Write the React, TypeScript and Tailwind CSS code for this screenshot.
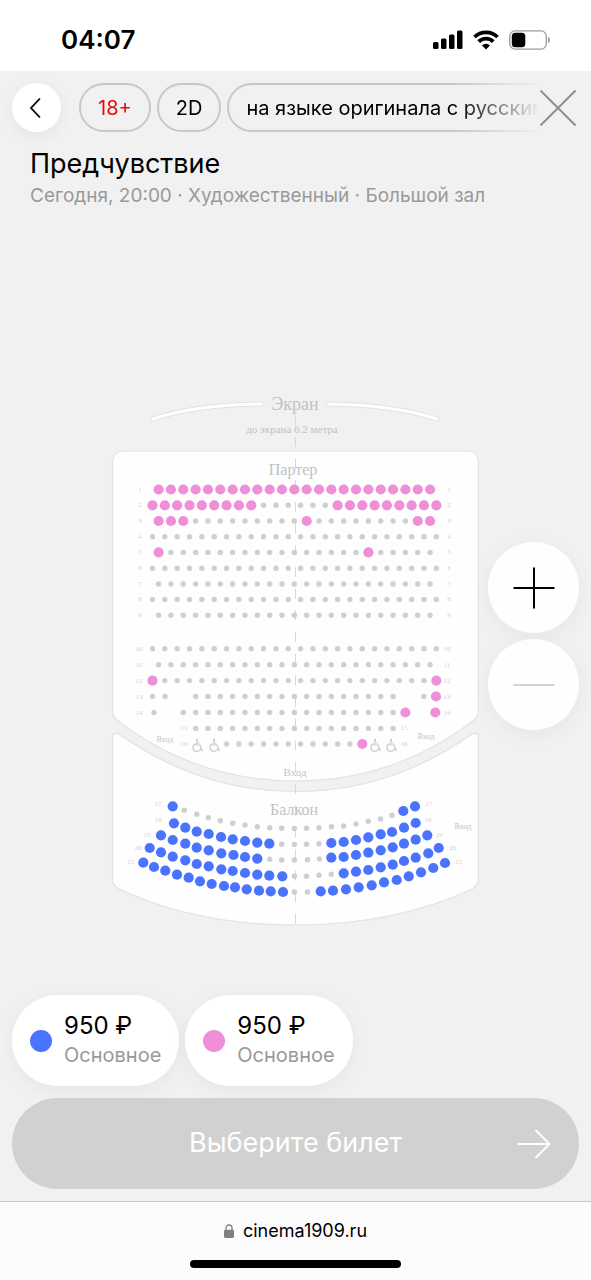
import { useState } from 'react';

type Zone = 'free' | 'pink' | 'blue';
type Point = [x: number, y: number];

interface ParterreRow {
  label: number;
  y: number;
  // odd rows start half a step further right than even ones
  start: number;
  from: number;
  to: number;
  available: number[];
  labelX: [number, number];
}

interface BalconyRow {
  label: number;
  labels: [Point, Point];
  seats: Point[];
  // number of seats on sale at the left and right ends of the row
  left: number;
  right: number;
}

const STEP = 12.34;
const WIDE = 152.5;
const NARROW = 158.6;

const range = (from: number, to: number) =>
  Array.from({ length: to - from + 1 }, (_, i) => from + i);

const parterre: ParterreRow[] = [
  { label: 1, y: 489.5, start: NARROW, from: 0, to: 22, available: range(0, 22), labelX: [140, 449] },
  { label: 2, y: 505.3, start: WIDE, from: 0, to: 23, available: [...range(0, 8), ...range(15, 23)], labelX: [140, 449] },
  { label: 3, y: 521, start: NARROW, from: 0, to: 22, available: [0, 1, 2, 12, 21, 22], labelX: [140, 449] },
  { label: 4, y: 536.8, start: WIDE, from: 0, to: 23, available: [], labelX: [140, 449] },
  { label: 5, y: 552.4, start: NARROW, from: 0, to: 22, available: [0, 17], labelX: [140, 449] },
  { label: 6, y: 568.2, start: WIDE, from: 0, to: 23, available: [], labelX: [140, 449] },
  { label: 7, y: 584, start: NARROW, from: 0, to: 22, available: [], labelX: [140, 449] },
  { label: 8, y: 599.4, start: WIDE, from: 0, to: 23, available: [], labelX: [140, 449] },
  { label: 9, y: 615.3, start: NARROW, from: 0, to: 22, available: [], labelX: [140, 449] },
  { label: 10, y: 648.8, start: WIDE, from: 0, to: 23, available: [], labelX: [139, 447] },
  { label: 11, y: 664.7, start: NARROW, from: 0, to: 22, available: [], labelX: [139, 447] },
  { label: 12, y: 680.6, start: WIDE, from: 0, to: 23, available: [0, 23], labelX: [139, 447] },
  { label: 13, y: 696.5, start: NARROW, from: 3, to: 19, available: [], labelX: [139, 447] },
  { label: 14, y: 712.5, start: NARROW, from: 2, to: 20, available: [20], labelX: [139, 447] },
  { label: 15, y: 728.4, start: NARROW, from: 3, to: 19, available: [], labelX: [184, 404] },
  { label: 16, y: 744, start: WIDE, from: 6, to: 17, available: [17], labelX: [184, 404] },
];

// seats that stand apart from their row
const sideSeats: { at: Point; zone: Zone }[] = [
  { at: [152.6, 696.5], zone: 'free' },
  { at: [165, 696.5], zone: 'free' },
  { at: [424, 696.5], zone: 'free' },
  { at: [436, 696.5], zone: 'pink' },
  { at: [154, 712.5], zone: 'free' },
  { at: [435.3, 712.5], zone: 'pink' },
];

const balcony: BalconyRow[] = [
  {
    label: 17,
    labels: [[158, 804], [429, 804]],
    left: 1,
    right: 2,
    seats: [
      [172.7, 806.3], [184.3, 810.3], [196.7, 814.3], [208.3, 817.7], [220.3, 820.7], [232.7, 823.3], [245, 825],
      [257.3, 826.7], [269.7, 827.7], [281.7, 828.3], [294.4, 828.5], [306.5, 828.3], [319, 827.7], [331.5, 826.7],
      [343.7, 826], [356, 824], [368.3, 821.3], [380.5, 819], [392, 815.3], [403.3, 811], [415, 806.3],
    ],
  },
  {
    label: 18,
    labels: [[158, 820], [428, 820]],
    left: 9,
    right: 8,
    seats: [
      [174, 823.3], [185.3, 827.7], [196.7, 831.7], [208.7, 834], [221, 837], [232.7, 839.3], [245, 841],
      [257.3, 842.7], [269.3, 843.7], [281.7, 844.3], [294.4, 844.5], [306.5, 844.3], [319, 843.7], [331.3, 843],
      [343.7, 842], [356, 840], [368.3, 837.3], [380.7, 834.3], [392, 832], [404, 827.7], [415.7, 823],
    ],
  },
  {
    label: 19,
    labels: [[147, 835], [439, 835]],
    left: 9,
    right: 9,
    seats: [
      [161, 835.3], [172.7, 840], [185.3, 843.7], [196.7, 847.7], [208.7, 850.3], [221.3, 853.3], [233.5, 855],
      [245, 857], [257.3, 858.7], [269.7, 859.3], [281.7, 860], [294.4, 860], [307.5, 859.7], [319.5, 859],
      [331.3, 857.7], [343.7, 857], [356, 855], [368.3, 852.7], [380.7, 850.3], [392.7, 847.3], [404, 843.7],
      [415.7, 839.7], [427.3, 835.3],
    ],
  },
  {
    label: 20,
    labels: [[138, 848], [453, 848]],
    left: 12,
    right: 9,
    seats: [
      [149.7, 848], [161, 852.3], [172.7, 856.7], [185.3, 860.3], [196.7, 864], [208.7, 866.3], [221.3, 869.3],
      [232.7, 871], [245, 873], [257.3, 874.7], [269.3, 875.7], [282.3, 876.3], [294.4, 876.3], [306.5, 876.3],
      [319, 875.3], [331.3, 874.3], [343.7, 873.3], [356, 871.7], [368.3, 870], [380.7, 867.3], [392.7, 864.7],
      [404, 861], [415.7, 857.7], [428.3, 853.3], [438.7, 848],
    ],
  },
  {
    label: 21,
    labels: [[131, 862], [459, 862]],
    left: 13,
    right: 11,
    seats: [
      [143.3, 862.7], [154, 867], [165.3, 870.7], [177, 874.7], [188.7, 877.7], [200, 881.3], [211.7, 884],
      [224, 886], [235, 887.3], [246.7, 889.3], [259, 890.7], [270.7, 891.3], [283, 892], [294.4, 892],
      [307.5, 892], [320.7, 891.3], [333, 890.7], [346, 889.3], [358.7, 887.3], [371.7, 885.3], [384, 882.3],
      [396.7, 880], [408.7, 876.3], [421, 872.3], [433.3, 868], [445, 863],
    ],
  },
];

const tariffs = [
  { id: 'balcony', price: '950 ₽', name: 'Основное', dot: 'bg-[#4a73ff]' },
  { id: 'parterre', price: '950 ₽', name: 'Основное', dot: 'bg-[#ee8fd8]' },
];

const zoneFill: Record<Zone, string> = {
  free: 'fill-[#cfcfcf]',
  pink: 'fill-[#ee8fd8]',
  blue: 'fill-[#4a73ff]',
};

function Seat({ at, zone }: { at: Point; zone: Zone }) {
  return <circle cx={at[0]} cy={at[1]} r={zone === 'free' ? 2.7 : 5.1} className={zoneFill[zone]} />;
}

function Wheelchair({ x, y }: { x: number; y: number }) {
  return (
    <g transform={`translate(${x} ${y})`} className="fill-none stroke-[#cccccc]" strokeWidth="1.2">
      <circle cx="0" cy="-5" r="1.2" className="fill-[#cccccc] stroke-none" />
      <path d="M0-4v4h3.2l1.6 5.4 1-.5M0-2h2.6" />
      <path d="M-1-1.200a3.800 3.800 0 1 0 4.600 4.200" />
    </g>
  );
}

function RowLabel({ x, y, children }: { x: number; y: number; children: number }) {
  return (
    <text x={x} y={y + 2} className="fill-[#d2d2d2] text-[7px]">
      {children}
    </text>
  );
}

function HallPlan({ zoomed }: { zoomed: boolean }) {
  return (
    <svg
      viewBox="0 380 591 560"
      role="img"
      aria-label="Схема зала"
      className={zoomed ? 'block w-full scale-150' : 'block w-full'}
    >
      <g strokeLinecap="round" className="fill-none">
        <path d="M153 419Q195 405 262 404M328 404Q395 405 437 419" className="stroke-[#e2e2e2]" strokeWidth="5" />
        <path d="M153 419Q195 405 262 404M328 404Q395 405 437 419" className="stroke-white" strokeWidth="3" />
      </g>

      <g className="fill-[#fefefe] stroke-[#e2e2e2]" strokeWidth="1.2">
        <path d="M124 451H467Q478.500 451 478.500 463V711Q478.500 716 474 720Q395 781 295.500 781Q196 781 117 720Q112.500 716 112.500 711V463Q112.500 451 124 451Z" />
        <path d="M112.500 738Q112.500 731 119 734Q200 791.500 295.500 791.500Q391 791.500 472 734Q478.500 731 478.500 738V879Q478.500 885 472 889Q395 925 295.500 925Q196 925 119 889Q112.500 885 112.500 879Z" />
      </g>

      <path d="M295.500 415V925" strokeDasharray="10 11.700" className="stroke-[#d8d8d8]" strokeWidth="1" />

      <g textAnchor="middle" className="fill-[#c2c2c2] font-['Liberation_Serif',serif]">
        <text x="295" y="410" className="text-[18px]">Экран</text>
        <text x="292" y="433" className="text-[11px]">до экрана 6.2 метра</text>
        <text x="293" y="475" className="text-[16px]">Партер</text>
        <text x="294" y="815" className="text-[16px]">Балкон</text>
        <text x="295" y="776" className="text-[11px]">Вход</text>
        <text x="165" y="742" className="text-[8px]">Вход</text>
        <text x="426" y="739" className="text-[8px]">Вход</text>
        <text x="463" y="829" className="text-[8px]">Вход</text>

        {parterre.map((row) => (
          <g key={row.label}>
            <RowLabel x={row.labelX[0]} y={row.y}>{row.label}</RowLabel>
            <RowLabel x={row.labelX[1]} y={row.y}>{row.label}</RowLabel>
          </g>
        ))}
        {balcony.map((row) => (
          <g key={row.label}>
            <RowLabel x={row.labels[0][0]} y={row.labels[0][1]}>{row.label}</RowLabel>
            <RowLabel x={row.labels[1][0]} y={row.labels[1][1]}>{row.label}</RowLabel>
          </g>
        ))}
      </g>

      {parterre.map((row) =>
        range(row.from, row.to).map((n) => (
          <Seat
            key={`${row.label}-${n}`}
            at={[row.start + n * STEP, row.y]}
            zone={row.available.includes(n) ? 'pink' : 'free'}
          />
        )),
      )}
      {sideSeats.map((seat) => (
        <Seat key={seat.at.join()} at={seat.at} zone={seat.zone} />
      ))}
      {balcony.map((row) =>
        row.seats.map((at, n) => (
          <Seat
            key={`${row.label}-${n}`}
            at={at}
            zone={n < row.left || n >= row.seats.length - row.right ? 'blue' : 'free'}
          />
        )),
      )}

      {[197, 214, 375, 391].map((x) => (
        <Wheelchair key={x} x={x} y={745} />
      ))}
    </svg>
  );
}

function StatusBar() {
  return (
    <div className="flex h-[71px] items-center justify-between bg-white pt-2 pr-10 pl-[61px]">
      <span className="text-[26px] leading-8 font-semibold">04:07</span>
      <div className="flex items-center gap-[10px]">
        <svg viewBox="0 0 30 20" className="h-5 w-[30px]">
          <rect x="0" y="12" width="5.500" height="7" rx="1.500" />
          <rect x="8" y="8.500" width="5.500" height="10.500" rx="1.500" />
          <rect x="16" y="4.500" width="5.500" height="14.500" rx="1.500" />
          <rect x="24" y="0.500" width="5.500" height="18.500" rx="1.500" />
        </svg>
        <svg viewBox="0 0 26 20" className="h-5 w-[26px] fill-none stroke-black" strokeWidth="3.800">
          <path d="M1.500 7a16.500 16.500 0 0 1 23 0" />
          <path d="M5.700 11.700a10.400 10.400 0 0 1 14.600 0" />
          <path d="M13 19.600l-4-4.200a5.600 5.600 0 0 1 8 0z" className="fill-black stroke-none" />
        </svg>
        <svg viewBox="0 0 42 20" className="h-5 w-[42px]">
          <rect x="0.800" y="0.800" width="36.500" height="18.400" rx="5.500" className="fill-none stroke-[#9b9b9b]" strokeWidth="1.300" />
          <rect x="2.800" y="2.800" width="13.500" height="14.400" rx="3.500" />
          <path d="M39 6.800c2.600 1 2.600 5.400 0 6.400z" className="fill-[#9b9b9b]" />
        </svg>
      </div>
    </div>
  );
}

function App() {
  const [zoomed, setZoomed] = useState(false);

  return (
    <div className="flex min-h-screen flex-col bg-[#f1f1f1] font-[Inter,sans-serif] text-black">
      <StatusBar />

      <main className="relative flex flex-1 flex-col overflow-hidden">
        <header className="px-3 pt-3">
          <div className="flex items-center">
            <button
              type="button"
              aria-label="Назад"
              className="flex size-[49px] shrink-0 items-center justify-center rounded-full bg-white shadow-[0_4px_16px_rgba(0,0,0,0.06)]"
            >
              <svg viewBox="0 0 12 22" className="mr-1 h-[22px] w-3 fill-none stroke-black" strokeWidth="1.800">
                <path d="M11 1.500L2 11l9 9.500" />
              </svg>
            </button>
            <div className="ml-[18px] flex min-w-0 flex-1 gap-[6px] overflow-hidden text-[20px] whitespace-nowrap [mask-image:linear-gradient(to_right,black_82%,transparent)]">
              <span className="flex h-[49px] shrink-0 items-center rounded-full border-2 border-[#c8c8c8] px-[17px] text-[#e60b0b]">18+</span>
              <span className="flex h-[49px] shrink-0 items-center rounded-full border-2 border-[#c8c8c8] px-[17px]">2D</span>
              <span className="flex h-[49px] shrink-0 items-center rounded-full border-2 border-[#c8c8c8] px-[17px]">
                на языке оригинала с русскими субтитрами
              </span>
            </div>
            <button type="button" aria-label="Закрыть" className="flex h-10 w-[39px] shrink-0 items-center">
              <svg viewBox="0 0 36 36" className="size-9 stroke-[#8f8f8f]" strokeWidth="2">
                <path d="M0.500 0.500l35 35M35.500 0.500l-35 35" />
              </svg>
            </button>
          </div>
          <div className="px-[18px] pt-4">
            <h1 className="text-[27px] leading-8">Предчувствие</h1>
            <p className="text-[19px] leading-8 text-[#999999]">Сегодня, 20:00 · Художественный · Большой зал</p>
          </div>
        </header>

        <section className="flex flex-1 flex-col pt-42">
          <HallPlan zoomed={zoomed} />
        </section>

        <div className="absolute top-1/2 right-3 flex -translate-y-1/2 flex-col gap-[6px]">
          <button
            type="button"
            aria-label="Приблизить"
            onClick={() => setZoomed(true)}
            className="flex size-[91px] items-center justify-center rounded-full bg-white/90 shadow-[0_4px_20px_rgba(0,0,0,0.05)]"
          >
            <svg viewBox="0 0 42 42" className="size-[42px] stroke-black" strokeWidth="2">
              <path d="M21 0.500v41M0.500 21h41" />
            </svg>
          </button>
          <button
            type="button"
            aria-label="Отдалить"
            disabled={!zoomed}
            onClick={() => setZoomed(false)}
            className="group flex size-[91px] items-center justify-center rounded-full bg-white/90 shadow-[0_4px_20px_rgba(0,0,0,0.05)]"
          >
            <svg viewBox="0 0 42 42" className="size-[42px] stroke-black group-disabled:stroke-[#d4d4d4]" strokeWidth="2">
              <path d="M0.500 21h41" />
            </svg>
          </button>
        </div>

        <footer className="flex flex-col gap-3 p-3">
          <ul className="flex gap-[6px]">
            {tariffs.map((tariff) => (
              <li
                key={tariff.id}
                className="flex h-[91px] items-center gap-3 rounded-full bg-white px-[18px] shadow-[0_4px_20px_rgba(0,0,0,0.05)]"
              >
                <span className={`size-[22px] rounded-full ${tariff.dot}`} />
                <span className="flex flex-col pb-[2px]">
                  <span className="text-[24px] leading-[30px]">{tariff.price}</span>
                  <span className="text-[20px] leading-7 text-[#999999]">{tariff.name}</span>
                </span>
              </li>
            ))}
          </ul>
          <button
            type="button"
            disabled
            className="relative flex h-[91px] w-full items-center justify-center rounded-full bg-[#d1d1d1] text-[27px] text-white"
          >
            Выберите билет
            <svg viewBox="0 0 34 30" className="absolute right-7 h-[30px] w-[34px] fill-none stroke-white" strokeWidth="2">
              <path d="M0.500 15h32M18.500 1l14 14-14 14" />
            </svg>
          </button>
        </footer>
      </main>

      <div className="flex h-[79px] flex-col items-center justify-between border-t border-[#c8c8c8] bg-[#fcfcfc] pt-[15px] pb-3">
        <a href="https://cinema1909.ru" className="flex items-center gap-[9px] text-[18px] leading-7">
          <svg viewBox="0 0 10 14" className="h-[14px] w-[10px]">
            <rect x="0" y="5.800" width="10" height="8.200" rx="1.400" className="fill-[#808080]" />
            <path d="M2 6.500V4a3 3 0 0 1 6 0v2.500" className="fill-none stroke-[#808080]" strokeWidth="1.300" />
          </svg>
          cinema1909.ru
        </a>
        <div className="h-2 w-[211px] rounded-full bg-black" />
      </div>
    </div>
  );
}

export default App;
